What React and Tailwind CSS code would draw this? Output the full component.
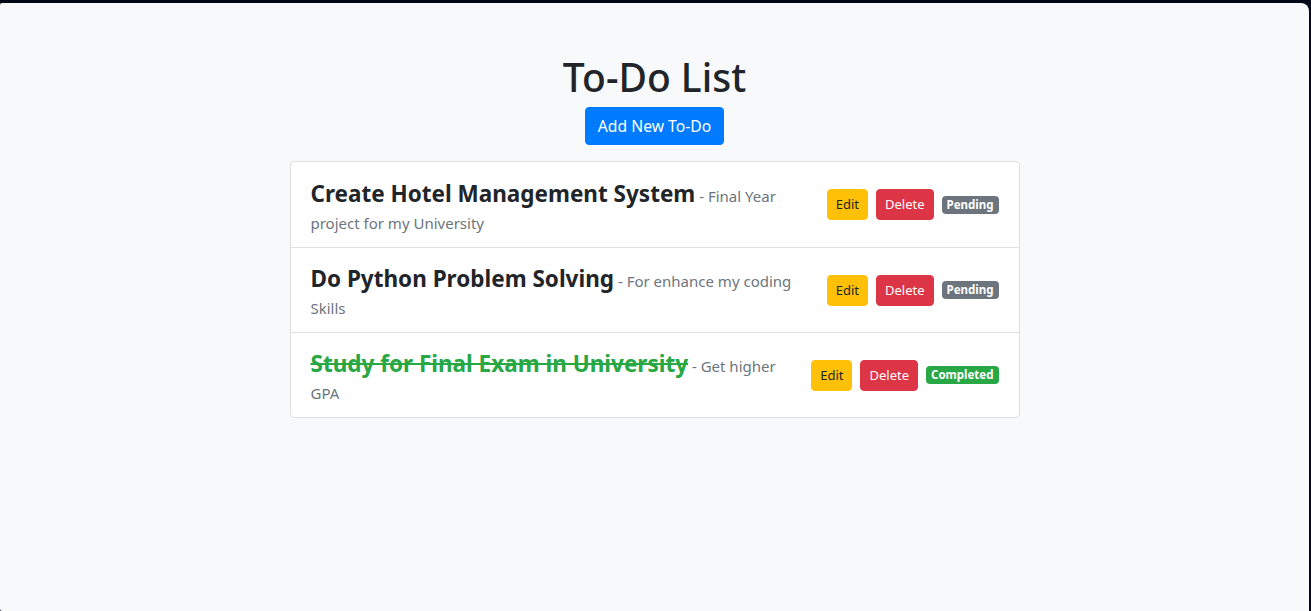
import React from 'react';

const todos = [
  { id: 1, title: 'Create Hotel Management System', desc: 'Final Year project for my University', done: false },
  { id: 2, title: 'Do Python Problem Solving', desc: 'For enhance my coding Skills', done: false },
  { id: 3, title: 'Study for Final Exam in University', desc: 'Get higher GPA', done: true },
];

export default function App() {
  return (
    <div className="h-[611px] bg-[#030718] pt-[3px] pr-[2px] font-['Noto_Sans',sans-serif] text-[#212529]">
      <div className="h-full bg-[#f8f9fa] rounded-tr-[8px] rounded-tl-[2px] rounded-bl-[2px]">
        <div className="w-[730px] mx-auto pt-[50px]">
          {/* Header */}
          <h1 className="text-[39px] leading-[48px] font-medium text-center mb-[6px]">To-Do List</h1>
          <div className="flex justify-center">
            <button className="bg-[#007bff] text-white text-[15.7px] leading-6 px-3 py-[6px] rounded border border-[#007bff]">
              Add New To-Do
            </button>
          </div>

          {/* List */}
          <ul className="mt-4 bg-white border border-[#dfdfdf] rounded">
            {todos.map((todo, i) => (
              <li
                key={todo.id}
                className={`flex items-center justify-between px-5 py-3 h-[85px] ${i > 0 ? 'border-t border-[#dfdfdf]' : ''}`}
              >
                <div className="min-w-0 text-[15px] leading-[27px] pt-[7px] pr-2">
                  <span
                    className={`text-[22.5px] leading-[27px] font-bold ${todo.done ? 'text-[#28a745] line-through' : 'text-[#212529]'}`}
                  >
                    {todo.title}
                  </span>
                  <span className="text-[#6c757d]"> - {todo.desc}</span>
                </div>
                <div className="flex items-center gap-2 shrink-0">
                  <button className="bg-[#ffc107] text-[#212529] text-[13px] leading-[21px] px-2 py-1 rounded border border-[#ffc107]">
                    Edit
                  </button>
                  <button className="bg-[#dc3545] text-white text-[13px] leading-[21px] px-2 py-1 rounded border border-[#dc3545]">
                    Delete
                  </button>
                  <span
                    className={`text-white text-[11.5px] font-bold leading-[12px] px-[5px] py-[3px] rounded ${todo.done ? 'bg-[#28a745]' : 'bg-[#6c757d]'}`}
                  >
                    {todo.done ? 'Completed' : 'Pending'}
                  </span>
                </div>
              </li>
            ))}
          </ul>
        </div>
      </div>
    </div>
  );
}
